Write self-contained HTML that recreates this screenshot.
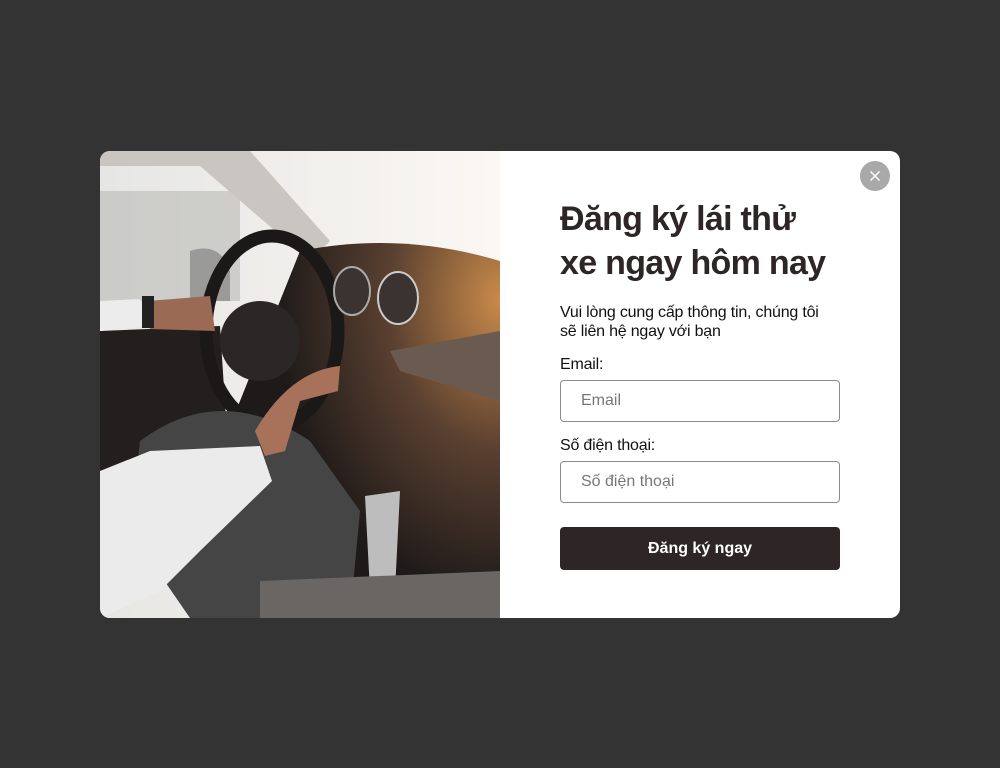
<!DOCTYPE html>
<html><head><meta charset="utf-8"><style>
*{box-sizing:border-box;margin:0;padding:0}
body{width:1000px;height:768px;background:#333;font-family:"Liberation Sans",Arial,sans-serif;position:relative;overflow:hidden}
.modal{position:absolute;left:100px;top:151px;width:800px;height:467px;background:#fff;border-radius:10px;overflow:hidden}
.photo{position:absolute;left:0;top:0;width:400px;height:467px}
.close{position:absolute;left:860px;top:161px;width:30px;height:30px;border-radius:50%;background:#a9a9a9}
h1{position:absolute;left:560px;top:197px;font-size:34px;line-height:44px;font-weight:bold;color:#2d2526;letter-spacing:-0.7px}
.sub{position:absolute;left:560px;top:303px;font-size:16px;line-height:19px;color:#111;width:272px;letter-spacing:-0.2px}
.lab{position:absolute;left:560px;font-size:16px;color:#111;letter-spacing:-0.2px}
.inp{position:absolute;left:560px;width:280px;height:42px;border:1px solid #8a8a8a;border-radius:4px;font-size:16px;color:#777;padding:11px 0 0 20px}
.btn{position:absolute;left:560px;top:527px;width:280px;height:43px;background:#2e2526;border-radius:4px;color:#fff;font-weight:bold;font-size:16px;text-align:center;line-height:43px}
</style></head><body>
<div class="modal">
<svg class="photo" viewBox="0 0 400 467">
<defs>
<linearGradient id="sky" x1="0" y1="0" x2="1" y2="0"><stop offset="0" stop-color="#e6e6e4"/><stop offset="1" stop-color="#fbf8f4"/></linearGradient>
<radialGradient id="glow" cx="1" cy="0.15" r="0.8"><stop offset="0" stop-color="#c98a4a"/><stop offset="0.5" stop-color="#5a4030"/><stop offset="1" stop-color="#1e1a19"/></radialGradient>
</defs>
<rect width="400" height="467" fill="url(#sky)"/>
<rect x="0" y="40" width="140" height="110" fill="#b9b9b6" opacity="0.6"/>
<path d="M0 0 L150 0 L230 90 L210 110 L100 15 L0 15Z" fill="#c9c5c0"/>
<path d="M200 100 Q300 80 400 110 L400 467 L140 467 L120 300 Z" fill="url(#glow)"/>
<path d="M0 180 L120 175 L130 330 L0 360Z" fill="#231f1e"/>
<path d="M90 100 Q120 90 130 120 L130 150 L90 150Z" fill="#9a9a98"/>
<ellipse cx="172" cy="180" rx="66" ry="95" fill="none" stroke="#1b1918" stroke-width="13"/>
<ellipse cx="160" cy="190" rx="40" ry="40" fill="#2a2726"/>
<ellipse cx="252" cy="140" rx="18" ry="24" fill="#3a3330" stroke="#aaa" stroke-width="2"/>
<ellipse cx="298" cy="147" rx="20" ry="26" fill="#3a3330" stroke="#ccc" stroke-width="2"/>
<path d="M290 200 L400 180 L400 250 L300 220Z" fill="#6b5a50"/>
<path d="M40 290 Q120 230 210 290 L260 360 L250 467 L90 467 L30 380Z" fill="#454545"/>
<path d="M0 320 L50 300 L160 295 L172 330 L100 400 L60 440 L0 467Z" fill="#ebebeb"/>
<path d="M155 280 Q190 220 240 215 L238 240 L200 250 L185 300 L165 305Z" fill="#a8725a"/>
<path d="M0 150 L40 148 L50 175 L0 180Z" fill="#ececec"/>
<path d="M48 150 L110 145 L115 180 L50 178Z" fill="#9a6a55"/>
<rect x="42" y="145" width="12" height="32" fill="#222"/>
<path d="M265 345 L300 340 L295 440 L270 440Z" fill="#bdbdbd"/>
<path d="M160 430 L400 420 L400 467 L160 467Z" fill="#6a6664"/>
</svg>
</div>
<div class="close"><svg width="30" height="30"><path d="M10.5 10.5L19.5 19.5M19.5 10.5L10.5 19.5" stroke="#fff" stroke-width="1.5"/></svg></div>
<h1>Đăng ký lái thử<br>xe ngay hôm nay</h1>
<div class="sub">Vui lòng cung cấp thông tin, chúng tôi sẽ liên hệ ngay với bạn</div>
<div class="lab" style="top:356px">Email:</div>
<div class="inp" style="top:380px">Email</div>
<div class="lab" style="top:437px">Số điện thoại:</div>
<div class="inp" style="top:461px">Số điện thoại</div>
<div class="btn">Đăng ký ngay</div>
</body></html>
